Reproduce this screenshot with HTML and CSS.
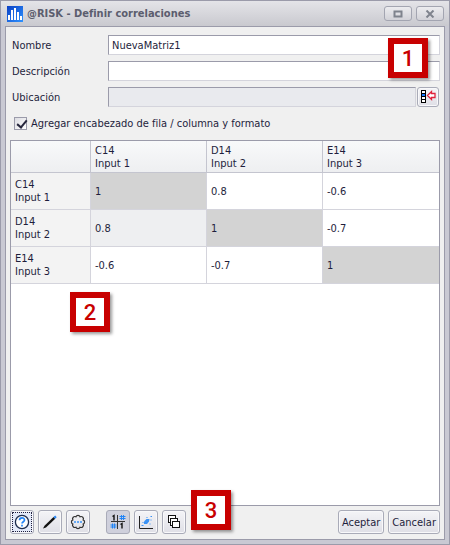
FILE: index.html
```
<!DOCTYPE html>
<html lang="es">
<head>
  <meta charset="UTF-8" />
  <meta name="viewport" content="width=device-width, initial-scale=1.0"/>
  <title>@RISK - Definir correlaciones</title>
  <link rel="stylesheet" href="styles.css">
</head>
<body>
  <div class="window">
    <div class="titlebar">
      <svg class="logo" width="16" height="16" viewBox="0 0 16 16">
        <defs>
          <linearGradient id="logo-bg" x1="0" y1="0" x2="1" y2="1">
            <stop offset="0" stop-color="#0a3fc4"/>
            <stop offset="1" stop-color="#2f93ff"/>
          </linearGradient>
        </defs>
        <rect width="16" height="16" fill="url(#logo-bg)"/>
        <path d="M1 9h2v5h-2zM4 4h2v10h-2zM7 2h2v12h-2zM10 6h2v8h-2zM13 10h2v4h-2z" fill="#fff"/>
      </svg>
      <h1>@RISK - Definir correlaciones</h1>
      <button class="win-button" type="button" aria-label="Maximizar">
        <svg width="10" height="8" viewBox="0 0 10 8"><rect x="1.5" y="1.5" width="7" height="5" fill="none" stroke="#7f838d" stroke-width="2"/></svg>
      </button>
      <button class="win-button" type="button" aria-label="Cerrar">
        <svg width="10" height="8" viewBox="0 0 10 8"><path d="M1.5 .5l7 7M8.500 .5l-7 7" fill="none" stroke="#7f838d" stroke-width="2"/></svg>
      </button>
    </div>

    <div class="panel">
      <div class="fields">
        <div class="field">
          <label for="nombre">Nombre</label>
          <input type="text" id="nombre" value="NuevaMatriz1" />
        </div>
        <div class="field">
          <label for="descripcion">Descripción</label>
          <input type="text" id="descripcion" />
        </div>
        <div class="field">
          <label for="ubicacion">Ubicación</label>
          <input type="text" id="ubicacion" disabled />
          <button class="button pick-button" type="button" aria-label="Seleccionar ubicación">
            <svg width="16" height="16" viewBox="0 0 16 16">
              <rect x="1.500" y="1.500" width="4" height="12" fill="#fff" stroke="#000"/>
              <path d="M1 4.500h5M1 7.500h5M1 10.500h5" stroke="#000"/>
              <rect x="2" y="5" width="3" height="2" fill="#1478ff"/>
              <path d="M7.500 6.500l4-4v2h3.500v4h-3.500v2z" fill="#fff" stroke="#e0223c" stroke-width="1.300"/>
            </svg>
          </button>
        </div>
        <span class="callout callout-1">1</span>
      </div>

      <div class="option">
        <input type="checkbox" id="encabezado" checked />
        <label for="encabezado">Agregar encabezado de fila / columna y formato</label>
      </div>

      <div class="matrix">
        <table>
          <thead>
            <tr>
              <th class="corner"></th>
              <th>C14<br>Input 1</th>
              <th>D14<br>Input 2</th>
              <th>E14<br>Input 3</th>
            </tr>
          </thead>
          <tbody>
            <tr>
              <th>C14<br>Input 1</th>
              <td class="diagonal">1</td>
              <td>0.8</td>
              <td>-0.6</td>
            </tr>
            <tr>
              <th>D14<br>Input 2</th>
              <td class="selected">0.8</td>
              <td class="diagonal">1</td>
              <td>-0.7</td>
            </tr>
            <tr>
              <th>E14<br>Input 3</th>
              <td>-0.6</td>
              <td>-0.7</td>
              <td class="diagonal">1</td>
            </tr>
          </tbody>
        </table>
        <span class="callout callout-2">2</span>
      </div>

      <div class="toolbar">
        <button class="button icon-button focused" type="button" aria-label="Ayuda">
          <svg width="16" height="16" viewBox="0 0 16 16">
            <circle cx="8" cy="8" r="6.600" fill="#fff" stroke="#1d2c4c" stroke-width="1.300"/>
            <path d="M5.500 6.300c0-3.200 5-3.200 5-.3c0 1.700-2.500 1.700-2.500 3.600M8 10.800v1.600" fill="none" stroke="#2384f5" stroke-width="1.700"/>
          </svg>
        </button>
        <button class="button icon-button" type="button" aria-label="Editar">
          <svg width="16" height="16" viewBox="0 0 16 16">
            <path d="M1 14.500l1.500-2.700L11.500 3l1.700 1.700L4 13.500z" fill="#111"/>
            <path d="M11.500 3l1.700 1.700l1.500-1.500l-1.500-1.700z" fill="#2384f5"/>
          </svg>
        </button>
        <button class="button icon-button" type="button" aria-label="Opciones">
          <svg width="16" height="16" viewBox="0 0 16 16">
            <path d="M5.900 2.800A2.300 2.300 0 0 1 10.100 2.800A2.300 2.300 0 0 1 13.200 5.900A2.300 2.300 0 0 1 13.200 10.100A2.300 2.300 0 0 1 10.100 13.200A2.300 2.300 0 0 1 5.900 13.200A2.300 2.300 0 0 1 2.800 10.100A2.300 2.300 0 0 1 2.800 5.900A2.300 2.300 0 0 1 5.900 2.800z" fill="none" stroke="#333" stroke-width="1.200"/>
            <path d="M4 8h2M7 8h2M10 8h2" stroke="#3a92f5" stroke-width="1.500"/>
          </svg>
        </button>
        <button class="button icon-button pressed first-in-group" type="button" aria-label="Matriz">
          <svg width="16" height="16" viewBox="0 0 16 16">
            <path d="M7.500 1v14M1 7.500h14" stroke="#333"/>
            <path d="M2.500 2.500l1.500-1v5M10.500 10.500l1.500-1v5" fill="none" stroke="#111" stroke-width="1.400"/>
            <path d="M11.500 1v5M13.500 1v5M9.500 2.500h6M9.500 4.500h6M2.500 9.500v5M4.500 9.500v5M.5 11h6M.5 13h6" stroke="#2384f5"/>
          </svg>
        </button>
        <button class="button icon-button" type="button" aria-label="Gráfico de dispersión">
          <svg width="16" height="16" viewBox="0 0 16 16">
            <path d="M1.500 2v12.500H15" fill="none" stroke="#222"/>
            <path d="M6 7.500l2.500-2.500l3 0l-.5 2.500l-2 2.500l-3 0z" fill="#3a92f5"/>
            <path d="M3.500 11.500h2M12.500 2.500h1.500M11.500 10h1M4.500 8.500h1M8.500 3.500h1M12.500 6h1" stroke="#3a92f5" stroke-width="1.200"/>
          </svg>
        </button>
        <button class="button icon-button" type="button" aria-label="Copias">
          <svg width="16" height="16" viewBox="0 0 16 16" fill="#fff" stroke="#111">
            <rect x="2.500" y="1.500" width="7" height="7"/>
            <rect x="4.500" y="4.500" width="7" height="7"/>
            <rect x="6.500" y="7.500" width="7" height="6"/>
          </svg>
        </button>
        <div class="actions">
          <button class="button text-button" type="button">Aceptar</button>
          <button class="button text-button" type="button">Cancelar</button>
        </div>
        <span class="callout callout-3">3</span>
      </div>
    </div>
  </div>
</body>
</html>
```
FILE: styles.css
```
* {
  box-sizing: border-box;
}

body {
  margin: 0;
  font-family: Tahoma, 'DejaVu Sans Condensed', 'DejaVu Sans', sans-serif;
  font-size: 11px;
  line-height: 13px;
  color: #1e1e3c;
}

.window {
  display: flex;
  flex-direction: column;
  min-height: 100vh;
  padding: 0 4px 4px;
  border: 1px solid #9b9baa;
  background-color: #c9c9d3;
}

.titlebar {
  display: flex;
  align-items: center;
  gap: 4px;
  height: 25px;
  margin: 0 -4px;
  padding: 0 5px 0 6px;
  background: linear-gradient(#e4e4e8, #c9c9cf);
}

.titlebar h1 {
  flex: 1;
  margin: 0;
  font-size: 11px;
  font-weight: bold;
  color: #5b5d6e;
}

.win-button {
  display: flex;
  align-items: center;
  justify-content: center;
  width: 28px;
  height: 15px;
  padding: 0;
  border: 1px solid #a3a5b1;
  border-radius: 3px;
  background: linear-gradient(#ececef, #d2d2d8);
}

.panel {
  display: flex;
  flex: 1;
  flex-direction: column;
  padding: 8px 4px 5px;
  border: 1px solid #9b9baa;
  background-color: #f0f0f0;
}

/* Form fields */
.fields {
  position: relative;
  display: flex;
  flex-direction: column;
  gap: 6px;
}

.field {
  display: flex;
  align-items: center;
}

.field label {
  width: 98px;
  padding-left: 2px;
}

.field input {
  flex: 1;
  min-width: 0;
  height: 20px;
  padding: 0 3px;
  border: 1px solid #d4d4dc;
  border-top-color: #9b9baa;
  border-left-color: #9b9baa;
  background-color: #fff;
  font: inherit;
  color: inherit;
}

.field input:disabled {
  background-color: #e9eaee;
}

.option {
  display: flex;
  align-items: center;
  gap: 4px;
  padding: 10px 4px;
}

.option input {
  appearance: none;
  position: relative;
  width: 13px;
  height: 13px;
  margin: 0;
  border: 1px solid #9b9baa;
  background: linear-gradient(135deg, #dcdce2, #fff);
}

.option input:checked::after {
  content: "";
  position: absolute;
  left: 4px;
  top: 0;
  width: 4px;
  height: 8px;
  border: solid #26263c;
  border-width: 0 2px 2px 0;
  transform: rotate(40deg);
}

/* Correlation matrix */
.matrix {
  position: relative;
  flex: 1;
  border: 1px solid #9b9baa;
  background-color: #fff;
}

table {
  width: 100%;
  border-collapse: separate;
  border-spacing: 0;
  table-layout: fixed;
}

th, td {
  height: 37px;
  padding: 0 4px;
  border-right: 1px solid #d4d4dc;
  border-bottom: 1px solid #d4d4dc;
  text-align: left;
  font-weight: normal;
}

th:last-child, td:last-child {
  border-right: none;
}

thead th {
  height: 32px;
  border-color: #c4c5cf;
  background: linear-gradient(#f8f9fa, #eeeff1);
}

tbody th {
  background-color: #f3f3f3;
}

.corner {
  width: 80px;
}

.diagonal {
  background-color: #d3d3d3;
}

.selected {
  background-color: #eeeff1;
}

/* Bottom buttons */
.toolbar {
  position: relative;
  display: flex;
  gap: 4px;
  padding-top: 4px;
}

.button {
  display: flex;
  align-items: center;
  justify-content: center;
  height: 24px;
  padding: 0;
  border: 1px solid #a9abb8;
  border-radius: 3px;
  background: linear-gradient(#f4f4f7, #dfdfe6);
  box-shadow: inset 0 0 0 1px #f8f8fa;
  font: inherit;
  color: inherit;
}

.icon-button {
  width: 24px;
}

.pick-button {
  width: 22px;
  height: 20px;
  margin: 0 1px;
}

.focused {
  background: #e3e9f8;
  outline: 1px dotted #1e1e3c;
  outline-offset: -3px;
}

.pressed {
  background: #cfd0dc;
  box-shadow: none;
}

.first-in-group {
  margin-left: 12px;
}

.actions {
  display: flex;
  gap: 4px;
  margin-left: auto;
}

.text-button {
  padding: 0 3px;
}

/* Numbered callouts */
.callout {
  position: absolute;
  display: flex;
  align-items: center;
  justify-content: center;
  width: 40px;
  height: 40px;
  border: 6px solid #c80000;
  background-color: #fff;
  box-shadow: 2px 2px 3px rgba(0, 0, 0, 0.4);
  font-family: Roboto, 'Liberation Sans', Arial, sans-serif;
  font-size: 22px;
  font-weight: 500;
  color: #c80000;
}

.callout-1 {
  top: 3px;
  right: 12px;
}

.callout-2 {
  top: 151px;
  left: 59px;
}

.callout-3 {
  top: -16px;
  left: 181px;
}
```
